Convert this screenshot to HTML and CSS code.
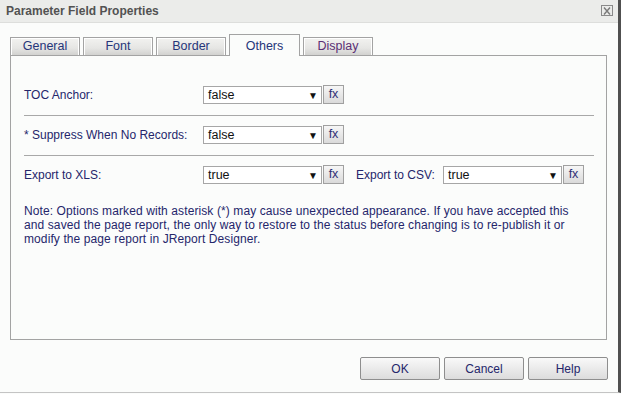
FILE: index.html
```html
<!DOCTYPE html>
<html>
<head>
<meta charset="utf-8">
<title>Parameter Field Properties</title>
<link rel="stylesheet" href="styles.css">
</head>
<body>
<div class="dialog">
  <div class="titlebar">
    <span class="title">Parameter Field Properties</span>
    <span class="close"><svg width="10" height="8" viewBox="0 0 10 8"><path d="M2 0.5 L8 7.5 M8 0.5 L2 7.5" stroke="#7a7a7a" stroke-width="1.4" fill="none"/></svg></span>
  </div>
  <div class="tabs">
    <div class="tab">General</div>
    <div class="tab">Font</div>
    <div class="tab">Border</div>
    <div class="tab active">Others</div>
    <div class="tab visited">Display</div>
  </div>
  <div class="panel">
    <div class="row">
      <span class="label">TOC Anchor:</span>
      <span class="select">false<span class="arrow">&#9660;</span></span><span class="fx">fx</span>
    </div>
    <div class="sep"></div>
    <div class="row">
      <span class="label">* Suppress When No Records:</span>
      <span class="select">false<span class="arrow">&#9660;</span></span><span class="fx">fx</span>
    </div>
    <div class="sep"></div>
    <div class="row last">
      <span class="label">Export to XLS:</span>
      <span class="select">true<span class="arrow">&#9660;</span></span><span class="fx">fx</span>
      <span class="label2">Export to CSV:</span>
      <span class="select">true<span class="arrow">&#9660;</span></span><span class="fx">fx</span>
    </div>
    <p class="note">Note: Options marked with asterisk (*) may cause unexpected appearance. If you have accepted this<br>and saved the page report, the only way to restore to the status before changing is to re-publish it or<br>modify the page report in JReport Designer.</p>
  </div>
  <div class="buttons">
    <button class="btn">OK</button>
    <button class="btn">Cancel</button>
    <button class="btn">Help</button>
  </div>
</div>
</body>
</html>
```
FILE: styles.css
```css
html, body {
  margin: 0;
  padding: 0;
  background: #fbfcfb;
}
body {
  font-family: "Liberation Sans", Arial, sans-serif;
  font-size: 12px;
  color: #25266b;
}
.dialog {
  width: 618px;
  height: 392px;
  border-right: 3px solid #505050;
  border-bottom: 1px solid #c4c4c4;
  background: #fbfcfb;
  display: flex;
  flex-direction: column;
}
.titlebar {
  box-sizing: border-box;
  height: 23px;
  background: #ebecea;
  border-bottom: 1px solid #dddedc;
  display: flex;
  align-items: center;
  justify-content: space-between;
  padding: 0 5px 0 6px;
}
.title {
  font-weight: bold;
  color: #525252;
  font-size: 12px;
}
.close {
  box-sizing: border-box;
  width: 12px;
  height: 11px;
  border: 1px solid #8a8a8a;
  display: flex;
  align-items: center;
  justify-content: center;
  margin-top: -1px;
}
.tabs {
  display: flex;
  align-items: flex-end;
  gap: 3px;
  padding: 11px 0 0 10px;
  margin-bottom: -1px;
  height: 22px;
}
.tab {
  box-sizing: border-box;
  width: 70px;
  height: 19px;
  border: 1px solid #a3a3a3;
  border-bottom: none;
  background: linear-gradient(#f2f2f0 0%, #e6e6e4 55%, #cfcfcd 100%);
  box-shadow: inset 1px 1px 0 #ffffff, inset -1px 0 0 #ffffff;
  text-align: center;
  line-height: 17px;
  color: #26357a;
  font-size: 12.5px;
}
.tab.active {
  position: relative;
  z-index: 1;
  height: 22px;
  background: #fbfcfb;
  box-shadow: none;
  line-height: 22px;
  width: 71px;
}
.tab.visited {
  color: #5b2f75;
}
.panel {
  box-sizing: border-box;
  margin: 0 11px 0 10px;
  height: 285px;
  border: 1px solid #a3a3a3;
  padding: 30px 12px 0 13px;
}
.row {
  display: flex;
  align-items: center;
  height: 18px;
}
.row.last {
  margin-top: 1px;
}
.label {
  width: 179px;
  flex: none;
}
.label2 {
  width: 87px;
  margin-left: 12px;
  flex: none;
}
.select {
  box-sizing: border-box;
  width: 119px;
  height: 18px;
  border: 1px solid #a6a6a6;
  background: #ffffff;
  color: #111111;
  padding-left: 4px;
  display: flex;
  align-items: center;
  justify-content: space-between;
  padding-right: 3px;
  font-size: 12.5px;
}
.arrow {
  font-size: 10px;
  color: #111;
}
.fx {
  box-sizing: border-box;
  width: 21px;
  height: 19px;
  margin-left: 1px;
  margin-top: -2px;
  border: 1px solid #a0a0a0;
  background: linear-gradient(#f6f6f6, #dadada);
  text-align: center;
  line-height: 16px;
  color: #2e2e75;
  font-size: 12.5px;
}
.sep {
  height: 1px;
  background: #a8a8a8;
  margin: 11px 0 10px;
}
.note {
  margin: 20px 0 0;
  line-height: 14px;
  white-space: nowrap;
  letter-spacing: 0.1px;
}
.buttons {
  display: flex;
  justify-content: flex-end;
  gap: 4px;
  padding: 17px 10px 0 0;
}
.btn {
  box-sizing: border-box;
  width: 80px;
  height: 23px;
  border: 1px solid #8e8e8e;
  border-radius: 2px;
  background: linear-gradient(#f9f9f9, #dcdcdc);
  font-family: "Liberation Sans", Arial, sans-serif;
  font-size: 12px;
  color: #25266b;
  padding: 0;
}
```
